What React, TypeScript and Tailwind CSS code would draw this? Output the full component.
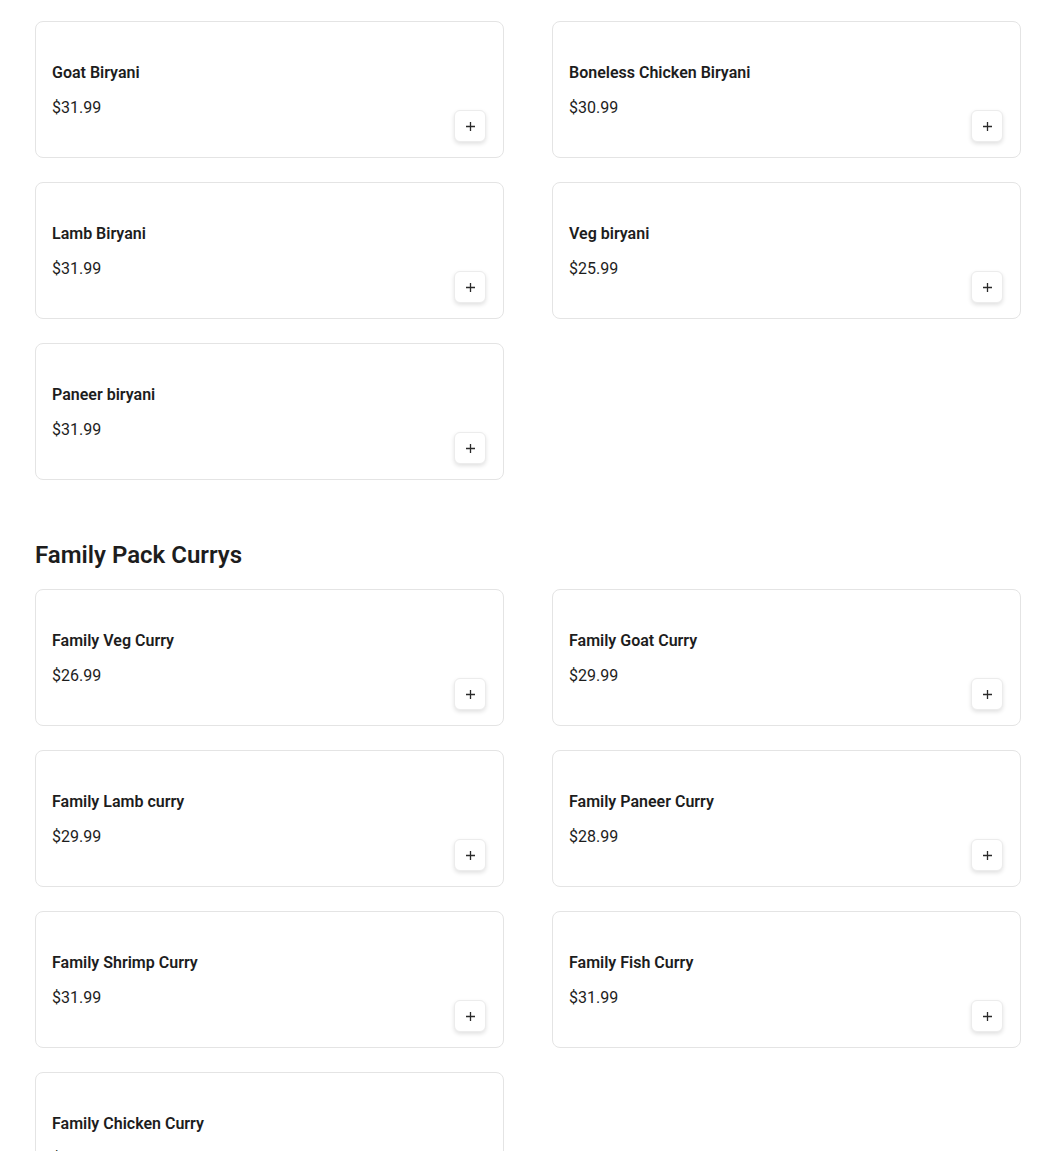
import React from "react";

type Item = { name: string; price: string };

const biryani: Item[] = [
  { name: "Goat Biryani", price: "$31.99" },
  { name: "Boneless Chicken Biryani", price: "$30.99" },
  { name: "Lamb Biryani", price: "$31.99" },
  { name: "Veg biryani", price: "$25.99" },
  { name: "Paneer biryani", price: "$31.99" },
];

const curry: Item[] = [
  { name: "Family Veg Curry", price: "$26.99" },
  { name: "Family Goat Curry", price: "$29.99" },
  { name: "Family Lamb curry", price: "$29.99" },
  { name: "Family Paneer Curry", price: "$28.99" },
  { name: "Family Shrimp Curry", price: "$31.99" },
  { name: "Family Fish Curry", price: "$31.99" },
  { name: "Family Chicken Curry", price: "$31.99" },
];

function Plus() {
  return (
    <svg width="11" height="11" viewBox="0 0 11 11" fill="none">
      <path d="M5.5 1v9M1 5.5h9" stroke="#2a2a2a" strokeWidth="1.3" />
    </svg>
  );
}

function Card({ item }: { item: Item }) {
  return (
    <div className="h-[137px] rounded-lg border border-[#e4e4e4] bg-white pl-4 pr-[17px] pt-[39px] pb-4 flex flex-col">
      <div className="text-[16px] leading-6 font-semibold text-[#1d1d1d]">{item.name}</div>
      <div className="mt-[11px] text-[16px] leading-6 text-[#1d1d1d]">{item.price}</div>
      <div className="flex justify-end -mt-[10px]">
        <button className="w-8 h-8 rounded-md bg-white border border-[#ececec] shadow-[0_2px_4px_rgba(0,0,0,0.12)] flex items-center justify-center">
          <Plus />
        </button>
      </div>
    </div>
  );
}

function Grid({ items }: { items: Item[] }) {
  return (
    <div className="grid grid-cols-[469px_469px] gap-x-12 gap-y-6">
      {items.map((it, i) => (
        <Card key={i} item={it} />
      ))}
    </div>
  );
}

export default function App() {
  return (
    <div className="bg-white min-h-screen pl-[35px] pt-[21px] font-['Roboto',sans-serif] text-[#1d1d1d]">
      <Grid items={biryani} />
      <h2 className="mt-[59px] mb-[18px] text-[24px] leading-8 font-semibold text-[#1d1d1d]">Family Pack Currys</h2>
      <Grid items={curry} />
    </div>
  );
}
